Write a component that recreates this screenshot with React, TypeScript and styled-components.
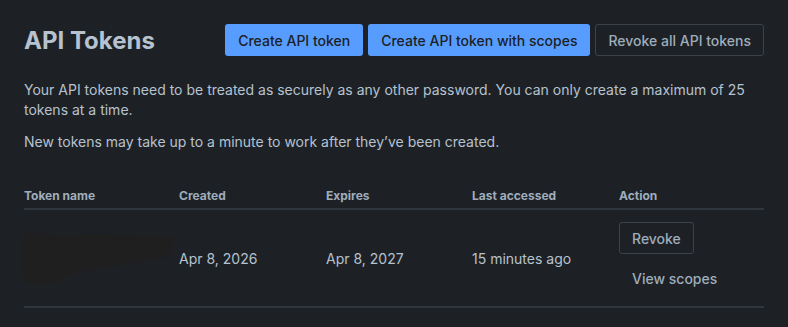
import styled, {createGlobalStyle} from "styled-components";
import React from "react";

const GlobalStyle = createGlobalStyle`
  body {
    margin: 0;
    background-color: #1d2125;
    color: #b6c2cf;
    font-family: Inter, "Noto Sans", sans-serif;
  }
`;

const Page = styled.div`
  padding: 24px;
`;

const HeaderRow = styled.div`
  display: flex;
  justify-content: space-between;
  align-items: center;
`;

const Title = styled.h1`
  margin: 0;
  font-size: 24px;
  font-weight: 700;
  color: #b6c2cf;
`;

const ButtonGroup = styled.div`
  display: flex;
  gap: 5px;
`;

interface ButtonProps {
    variant?: 'primary' | 'default' | 'subtle'
}

const Button = styled.button<ButtonProps>`
  height: 32px;
  padding: 0 12px;
  border-radius: 3px;
  font-family: inherit;
  font-size: 14px;
  font-weight: 500;
  white-space: nowrap;
  cursor: pointer;
  background-color: ${props => props.variant === 'primary' ? '#579dff' : 'transparent'};
  color: ${props => props.variant === 'primary' ? '#1d2125' : '#9fadbc'};
  border: 1px solid ${props => props.variant === 'default' ? '#3b4249' : 'transparent'};
`;

const Paragraph = styled.p`
  margin: 24px 0 0;
  font-size: 14px;
  line-height: 20px;
  & + & {
    margin-top: 12px;
  }
`;

const Table = styled.table`
  width: 100%;
  margin-top: 32px;
  border-collapse: collapse;
  table-layout: fixed;
`;

interface HeadCellProps {
    width?: number
}

const HeadCell = styled.th<HeadCellProps>`
  ${props => props.width && `width: ${props.width}px;`}
  padding: 4px 0 5px;
  text-align: left;
  font-size: 12px;
  font-weight: 700;
  color: #9fadbc;
  border-bottom: 2px solid #2f363d;
`;

const BodyRow = styled.tr`
  border-bottom: 2px solid #2f363d;
`;

const Cell = styled.td`
  padding: 12px 0;
  font-size: 14px;
  vertical-align: middle;
`;

const ActionStack = styled.div`
  display: flex;
  flex-direction: column;
  align-items: flex-start;
  gap: 8px;
`;

const Redaction = styled.svg`
  display: block;
  margin-left: -3px;
`;

const columns = [
    {label: 'Token name', width: 155},
    {label: 'Created', width: 147},
    {label: 'Expires', width: 146},
    {label: 'Last accessed', width: 147},
    {label: 'Action'},
];

export default function App() {
    return (
        <>
            <GlobalStyle/>
            <Page>
                <HeaderRow>
                    <Title>API Tokens</Title>
                    <ButtonGroup>
                        <Button variant="primary">Create API token</Button>
                        <Button variant="primary">Create API token with scopes</Button>
                        <Button variant="default">Revoke all API tokens</Button>
                    </ButtonGroup>
                </HeaderRow>
                <Paragraph>
                    Your API tokens need to be treated as securely as any other password. You can only create a
                    maximum of 25 tokens at a time.
                </Paragraph>
                <Paragraph>New tokens may take up to a minute to work after they’ve been created.</Paragraph>
                <Table>
                    <thead>
                    <tr>
                        {columns.map(c => <HeadCell key={c.label} width={c.width}>{c.label}</HeadCell>)}
                    </tr>
                    </thead>
                    <tbody>
                    <BodyRow>
                        <Cell>
                            <Redaction width="154" height="55" viewBox="0 0 154 55">
                                <path d="M6 2 Q2 2 1 10 L1 44 Q2 53 14 54 Q34 55 46 46 Q56 40 80 38 L146 26 Q153 24 153 18 L152 8 Q151 5 144 5 Q96 3 70 3 Q60 3 50 5 L16 2 Z"
                                      fill="#201f1f"/>
                            </Redaction>
                        </Cell>
                        <Cell>Apr 8, 2026</Cell>
                        <Cell>Apr 8, 2027</Cell>
                        <Cell>15 minutes ago</Cell>
                        <Cell>
                            <ActionStack>
                                <Button variant="default">Revoke</Button>
                                <Button variant="subtle">View scopes</Button>
                            </ActionStack>
                        </Cell>
                    </BodyRow>
                    </tbody>
                </Table>
            </Page>
        </>
    );
}
